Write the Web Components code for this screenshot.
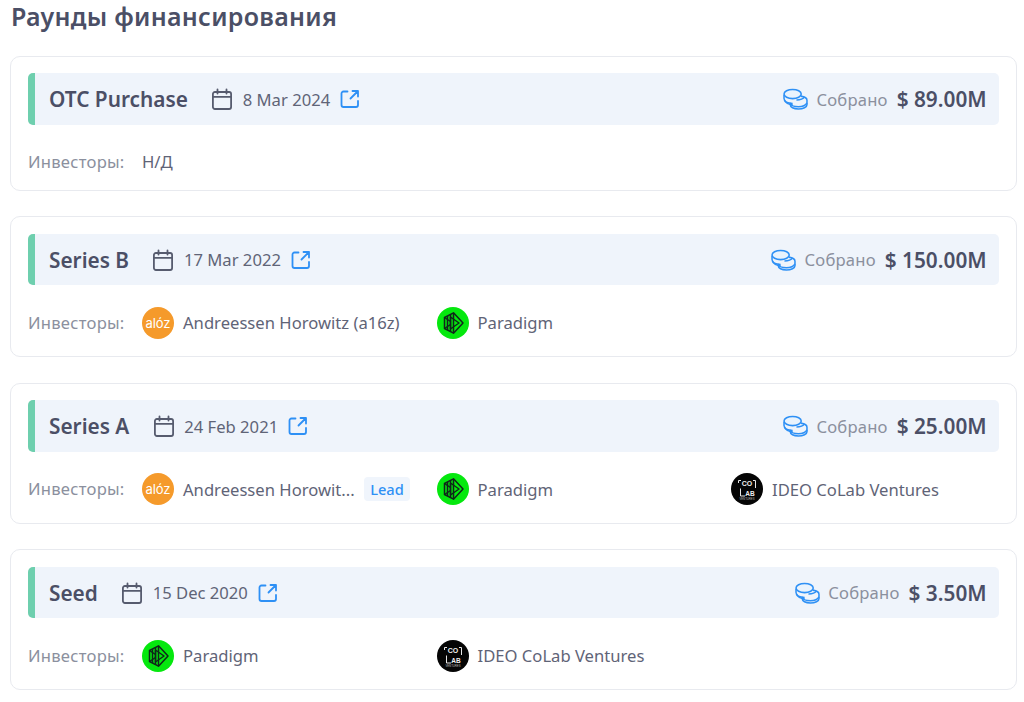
<!DOCTYPE html>
<html><head><meta charset="utf-8">
<style>
html,body{margin:0;padding:0;background:#fff}
body{font-family:"Noto Sans",sans-serif;width:1024px;height:702px;overflow:hidden}
</style></head>
<body>
<funding-page>
  <funding-round name="OTC Purchase" date="8 Mar 2024" amount="$ 89.00M" short>
    <span class="na" slot="na">Н/Д</span>
  </funding-round>
  <funding-round name="Series B" date="17 Mar 2022" amount="$ 150.00M">
    <investor-chip logo="a16z">Andreessen Horowitz (a16z)</investor-chip>
    <investor-chip logo="paradigm">Paradigm</investor-chip>
  </funding-round>
  <funding-round name="Series A" date="24 Feb 2021" amount="$ 25.00M">
    <investor-chip logo="a16z" lead>Andreessen Horowit...</investor-chip>
    <investor-chip logo="paradigm">Paradigm</investor-chip>
    <investor-chip logo="ideo">IDEO CoLab Ventures</investor-chip>
  </funding-round>
  <funding-round name="Seed" date="15 Dec 2020" amount="$ 3.50M">
    <investor-chip logo="paradigm">Paradigm</investor-chip>
    <investor-chip logo="ideo">IDEO CoLab Ventures</investor-chip>
  </funding-round>
</funding-page>
<script>
const logos={
a16z:`<svg width="32" height="32" viewBox="0 0 32 32"><circle cx="16" cy="16" r="16" fill="#f59a2b"/><text x="16" y="20.500" text-anchor="middle" font-family="Inter,sans-serif" font-size="13" fill="#fff" textLength="25">alóz</text></svg>`,
paradigm:`<svg width="32" height="32" viewBox="0 0 32 32"><circle cx="16" cy="16" r="16" fill="#05e80e"/><g fill="none" stroke="#10261a" stroke-width="1.500" stroke-linejoin="round"><path d="M7.500 10.500 16.500 5.800 26 16 16.500 26.200 7.500 21.500Z"/><path d="M10.500 9V23M13.500 7.500V24.500M16.500 6V26"/><path d="M13.500 10 22 16 13.500 22Z"/><path d="M7.500 10.500 13.500 14.500M7.500 21.500 13.500 17.500"/></g></svg>`,
ideo:`<svg width="32" height="32" viewBox="0 0 32 32"><circle cx="16" cy="16" r="16" fill="#050505"/><path d="M7.500 10V7.500H10M22 7.500H24.500V15M9.500 15.500V23H14" fill="none" stroke="#e8e8e8" stroke-width="1"/><text x="16" y="12.500" text-anchor="middle" font-family="Liberation Sans,sans-serif" font-size="7" font-weight="700" fill="#eee">CO</text><text x="19" y="22.500" text-anchor="middle" font-family="Liberation Sans,sans-serif" font-size="6.500" font-weight="700" fill="#eee">AB</text><text x="16" y="27.300" text-anchor="middle" font-family="Liberation Sans,sans-serif" font-size="2.800" fill="#bbb">VENTURES</text></svg>`
};
const calIcon=`<svg width="22" height="22" viewBox="0 0 22 22" fill="none" stroke="#565b6e" stroke-width="1.800" stroke-linecap="round" stroke-linejoin="round"><rect x="1.900" y="4" width="18.200" height="17" rx="2"/><path d="M1.900 8.800H20.100M6.500 1.500V5.500M15.500 1.500V5.500"/></svg>`;
const extIcon=`<svg width="20" height="20" viewBox="0 0 20 20" fill="none" stroke="#2e90f5" stroke-width="1.800" stroke-linecap="round" stroke-linejoin="round"><path d="M7.500 2.500H3.500A2 2 0 0 0 1.500 4.500V16A2 2 0 0 0 3.500 18H16A2 2 0 0 0 18 16V12"/><path d="M12.500 2H18V7.500M18 2 10.500 9.500"/></svg>`;
const coinIcon=`<svg width="25" height="22" viewBox="0 0 26 23" fill="none" stroke="#2e90f5" stroke-width="1.600"><ellipse cx="10" cy="6.300" rx="9" ry="4.800" fill="#e9f3fd"/><path d="M1 7V11C1 14 5 16 10 16.200"/><path d="M1.500 12.500C2 15.500 6 17.500 10 17.500"/><path d="M18.500 8.500C22.500 9 25 10.500 25 12.800V17.500C25 20 21 22 16 22S7.500 20 7.500 17.500V15.500"/><path d="M8 17C9 19 13 19.500 16 19.500S23.500 18.500 25 15.500"/><path d="M14 12.500C18 12.500 21 11.500 22.500 9.300"/></svg>`;

class FundingPage extends HTMLElement{
  constructor(){super();this.attachShadow({mode:'open'}).innerHTML=`<style>
  :host{display:block;padding:0 7px 0 10px;box-sizing:border-box;width:1024px}
  h2{margin:0;height:55.800px;box-sizing:border-box;font-size:25px;line-height:33px;font-weight:600;color:#4b4f66;letter-spacing:.28px;padding-left:1px}
  .list{display:flex;flex-direction:column;gap:25.400px}
  </style><h2>Раунды финансирования</h2><div class="list"><slot></slot></div>`;}
}
class FundingRound extends HTMLElement{
  constructor(){super();
    const g=n=>this.getAttribute(n);
    this.attachShadow({mode:'open'}).innerHTML=`<style>
    :host{display:block;box-sizing:border-box;border:1px solid #e8eaef;border-radius:10px;padding:16.600px 17px 12.500px;background:#fff}
    :host([short]){padding-bottom:12.100px;margin-bottom:-.500px}
    .head{height:51.500px;display:flex;align-items:center;background:#eff4fb;border-radius:5px;border-left:7px solid #6ecfae;padding:0 12.400px 0 14px;box-sizing:border-box}
    .name{font-size:20.800px;font-weight:600;color:#4b4f66;line-height:28px;margin-right:23.300px}
    .cal{display:flex;margin-right:9.600px}
    .date{font-size:16.640px;color:#5f6477;margin-right:10px}
    .ext{display:flex}
    .right{margin-left:auto;display:flex;align-items:center}
    .coin{display:flex;margin-right:8px}
    .lab{font-size:16.640px;color:#8b909e;margin-right:9px;letter-spacing:.2px}
    .amt{font-size:20.800px;font-weight:600;color:#4b4f66}
    .row{display:flex;margin-top:21.500px;align-items:flex-start}
    .il{width:114px;flex:none;font-size:16.640px;letter-spacing:.24px;color:#8b909e;line-height:32px;white-space:nowrap}
    .grid{flex:1;display:grid;grid-template-columns:294.500px 294.500px 1fr}
    ::slotted(.na){font-size:16.640px;color:#5f6477;line-height:32px}
    </style>
    <div class="head"><span class="name">${g('name')}</span><span class="cal">${calIcon}</span><span class="date">${g('date')}</span><span class="ext">${extIcon}</span>
    <div class="right"><span class="coin">${coinIcon}</span><span class="lab">Собрано</span><span class="amt">${g('amount')}</span></div></div>
    <div class="row"><span class="il">Инвесторы:</span><div class="grid"><slot name="na"></slot><slot></slot></div></div>`;}
}
class InvestorChip extends HTMLElement{
  constructor(){super();
    const lead=this.hasAttribute('lead');
    this.attachShadow({mode:'open'}).innerHTML=`<style>
    :host{display:flex;align-items:center;height:32px;margin-bottom:5px;min-width:0}
    .logo{width:32px;height:32px;flex:none;display:flex;margin-right:9px}
    .t{font-size:16.640px;color:#5f6477;white-space:nowrap;${lead?'width:172px;':''}}
    .lead{flex:none;margin-left:9px;background:#f0f5fc;color:#2e90f5;font-size:14.600px;font-weight:500;border-radius:4px;height:24px;line-height:24px;width:46px;text-align:center}
    </style><span class="logo">${logos[this.getAttribute('logo')]}</span><span class="t"><slot></slot></span>${lead?'<span class="lead">Lead</span>':''}`;}
}
customElements.define('funding-page',FundingPage);
customElements.define('funding-round',FundingRound);
customElements.define('investor-chip',InvestorChip);
</script>
</body></html>
